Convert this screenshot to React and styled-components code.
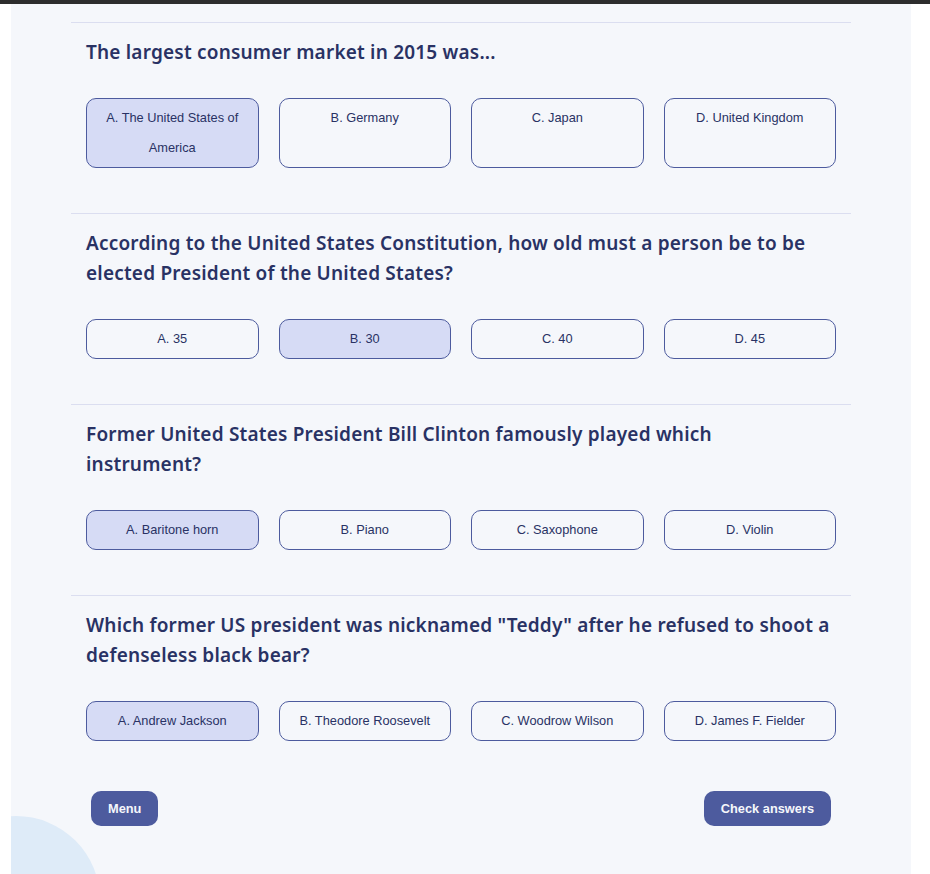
import styled, { createGlobalStyle } from 'styled-components'

const GlobalStyle = createGlobalStyle`
  html, body {
    margin: 0;
    padding: 0;
    background: #ffffff;
  }
`

const questions = [
    {
        title: 'The largest consumer market in 2015 was...',
        answers: ['The United States of America', 'Germany', 'Japan', 'United Kingdom'],
        picked: 0
    },
    {
        title: 'According to the United States Constitution, how old must a person be to be elected President of the United States?',
        answers: ['35', '30', '40', '45'],
        picked: 1
    },
    {
        title: 'Former United States President Bill Clinton famously played which instrument?',
        answers: ['Baritone horn', 'Piano', 'Saxophone', 'Violin'],
        picked: 0
    },
    {
        title: 'Which former US president was nicknamed "Teddy" after he refused to shoot a defenseless black bear?',
        answers: ['Andrew Jackson', 'Theodore Roosevelt', 'Woodrow Wilson', 'James F. Fielder'],
        picked: 0
    }
]

const letters = ['A', 'B', 'C', 'D']

const App = () => {
    return (
        <>
            <GlobalStyle />
            <TopBar />
            <Page>
                <Blob />
                {questions.map((q, i) => (
                    <Question key={i}>
                        <Title>{q.title}</Title>
                        <Answers>
                            {q.answers.map((a, j) => (
                                <Answer key={j} $picked={q.picked === j}>
                                    {letters[j]}. {a}
                                </Answer>
                            ))}
                        </Answers>
                    </Question>
                ))}
                <Footer>
                    <Button>Menu</Button>
                    <Button>Check answers</Button>
                </Footer>
            </Page>
        </>
    )
}

export default App

const TopBar = styled.div`
height: 4px;
background: #2d2d2d;
`

const Page = styled.div`
position: relative;
overflow: hidden;
width: 780px;
min-height: 870px;
margin-left: 11px;
padding: 18px 60px 0;
background: #f5f7fb;
`

const Blob = styled.div`
position: absolute;
left: -79px;
top: 812px;
width: 168px;
height: 168px;
border-radius: 50%;
background: #deebf8;
`

const Question = styled.section`
position: relative;
border-top: 1px solid #dbdef0;
padding: 14px 15px 45px;
`

const Title = styled.h2`
margin: 0 0 31px;
padding-right: 6px;
font-family: "Noto Sans", sans-serif;
font-weight: 600;
font-size: 19px;
letter-spacing: 0.2px;
line-height: 30px;
color: #293264;
`

const Answers = styled.div`
display: grid;
grid-template-columns: repeat(4, 1fr);
gap: 20px;
`

const Answer = styled.button`
box-sizing: border-box;
display: flex;
align-items: flex-start;
justify-content: center;
min-height: 40px;
padding: 4px 14px;
border: 1px solid #4d5b9e;
border-radius: 10px;
background: ${props => props.$picked ? '#d6dbf5' : 'transparent'};
color: #293264;
font-family: "Liberation Sans", Arial, sans-serif;
font-size: 12.8px;
line-height: 30px;
text-align: center;
`

const Footer = styled.div`
position: relative;
display: flex;
justify-content: space-between;
padding: 5px 20px 0;
`

const Button = styled.button`
height: 35px;
padding: 0 17px;
border: none;
border-radius: 10px;
background: #4d5b9e;
color: #f5f7fb;
font-family: "Liberation Sans", Arial, sans-serif;
font-weight: bold;
font-size: 12.8px;
`
